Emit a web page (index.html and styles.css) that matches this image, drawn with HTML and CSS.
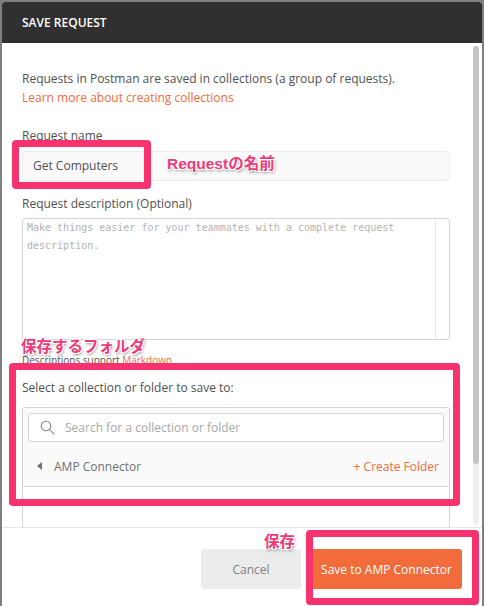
FILE: index.html
```html
<!DOCTYPE html>
<html lang="ja">
<head>
  <meta charset="UTF-8" />
  <title>Save Request</title>
  <link rel="stylesheet" href="styles.css">
</head>
<body>
  <div class="modal">
    <header class="modal-header">SAVE REQUEST</header>

    <div class="modal-main">
      <div class="modal-content">
        <p class="intro">Requests in Postman are saved in collections (a group of requests).</p>
        <a class="link intro-link" href="#">Learn more about creating collections</a>

        <label class="field-label name-label">Request name</label>
        <div class="name-input">Get Computers</div>

        <label class="field-label desc-label">Request description (Optional)</label>
        <div class="desc-box">
          <div class="desc-text">Make things easier for your teammates with a complete request description.</div>
          <div class="desc-gutter"></div>
        </div>
        <div class="desc-help">Descriptions support <a class="link" href="#">Markdown</a></div>

        <label class="field-label select-label">Select a collection or folder to save to:</label>
        <div class="picker">
          <div class="picker-top">
            <div class="search">
              <svg class="search-icon" width="15" height="15" viewBox="0 0 15 15" fill="none" stroke="#888" stroke-width="1.1">
                <circle cx="6" cy="6" r="4.8"/>
                <path d="M9.6 9.6 L14.4 14.4"/>
              </svg>
              <span>Search for a collection or folder</span>
            </div>
            <div class="picker-row">
              <span class="caret"></span>
              <span class="collection">AMP Connector</span>
              <a class="link create" href="#">+ Create Folder</a>
            </div>
          </div>
        </div>
      </div>
      <div class="scrollbar"><div class="thumb"></div></div>
    </div>

    <footer class="modal-footer">
      <button class="btn cancel">Cancel</button>
      <button class="btn save">Save to AMP Connector</button>
    </footer>
  </div>

  <!-- annotations drawn over the screenshot -->
  <div class="mark mark-name"></div>
  <div class="mark mark-folder"></div>
  <div class="mark mark-save"></div>
  <div class="note note-name">Requestの名前</div>
  <div class="note note-folder">保存するフォルダ</div>
  <div class="note note-save">保存</div>
</body>
</html>
```

FILE: styles.css
```css
* {
  margin: 0;
  padding: 0;
  box-sizing: border-box;
}

html, body {
  height: 606px;
  overflow: hidden;
}

body {
  position: relative;
  background: #7f7f7f;
  padding: 2px 2px 0 2px;
  font-family: 'Open Sans', sans-serif;
  font-size: 12px;
  color: #505050;
}

.modal {
  height: 604px;
  background: #fff;
  display: flex;
  flex-direction: column;
  border-radius: 3px 3px 0 0;
  overflow: hidden;
}

.modal-header {
  height: 41px;
  flex: none;
  background: #303030;
  color: #fff;
  font-size: 12px;
  font-weight: 600;
  line-height: 41px;
  padding-left: 20px;
}

.modal-main {
  height: 485px;
  flex: none;
  display: flex;
  border-bottom: 1px solid #e6e6e6;
}

.modal-content {
  width: 469px;
  flex: none;
  padding: 27px 0 0 20px;
  overflow: hidden;
}

.intro {
  line-height: 18px;
}

.link {
  color: #f26b3a;
  text-decoration: none;
}

.intro-link {
  display: block;
  line-height: 19px;
}

.field-label {
  display: block;
  line-height: 18px;
}

.name-label {
  margin-top: 20px;
}

.name-input {
  width: 428px;
  height: 30px;
  margin-top: 6px;
  padding-left: 10px;
  line-height: 28px;
  background: #fafafa;
  border: 1px solid #ececec;
  border-radius: 3px;
}

.desc-label {
  margin-top: 14px;
}

.desc-box {
  width: 428px;
  height: 122px;
  margin-top: 5px;
  display: flex;
  border: 1px solid #d4d4d4;
  border-radius: 3px;
}

.desc-text {
  flex: 1;
  padding: 0 4px;
  font-family: 'DejaVu Sans Mono', monospace;
  font-size: 10px;
  line-height: 18px;
  color: #b3b3b3;
}

.desc-gutter {
  width: 14px;
  border-left: 1px solid #e6e6e6;
}

.desc-help {
  margin-top: 12px;
  font-size: 10px;
  line-height: 16px;
  height: 16px;
}

.select-label {
  margin-top: 11px;
}

.picker {
  width: 428px;
  height: 131px;
  margin-top: 10px;
  border: 1px solid #d4d4d4;
  border-bottom: 0;
  border-radius: 3px 3px 0 0;
}

.picker-top {
  height: 79px;
  padding: 5px 5px 0 5px;
  background: #fafafa;
  border-bottom: 1px solid #d4d4d4;
  border-radius: 3px;
}

.search {
  height: 29px;
  display: flex;
  align-items: center;
  gap: 10px;
  padding-left: 11px;
  background: #fff;
  border: 1px solid #d4d4d4;
  border-radius: 3px;
  color: #a8a8a8;
}

.picker-row {
  height: 44px;
  display: flex;
  align-items: center;
  padding: 4px 5px 0 9px;
}

.caret {
  width: 0;
  height: 0;
  border-top: 4px solid transparent;
  border-bottom: 4px solid transparent;
  border-right: 5px solid #707070;
}

.collection {
  margin-left: 12px;
  color: #707070;
}

.create {
  margin-left: auto;
}

.scrollbar {
  width: 6px;
  height: 479px;
  margin: 3px 0 0 2px;
  background: #efefef;
  border-radius: 3px;
}

.thumb {
  height: 418px;
  background: #c4c4c4;
  border-radius: 3px;
}

.modal-footer {
  flex: 1;
  display: flex;
  justify-content: flex-end;
  gap: 10px;
  padding: 21px 20px 0 0;
}

.btn {
  height: 40px;
  border: none;
  border-radius: 3px;
  font-family: 'Open Sans', sans-serif;
  font-size: 12px;
}

.cancel {
  width: 100px;
  background: #ececec;
  color: #808080;
}

.save {
  width: 151px;
  background: #f26b3a;
  color: #fff;
  font-weight: 500;
}

.mark {
  position: absolute;
  border: 7px solid #f6336f;
  border-radius: 4px;
}

.mark-name {
  left: 12px;
  top: 140px;
  width: 139px;
  height: 49px;
}

.mark-folder {
  left: 9px;
  top: 363px;
  width: 451px;
  height: 143px;
}

.mark-save {
  left: 306px;
  top: 530px;
  width: 173px;
  height: 75px;
}

.note {
  position: absolute;
  font-family: 'Liberation Sans', 'Noto Sans CJK JP', sans-serif;
  font-weight: 700;
  color: #ee3a78;
  text-shadow: 1px 1px 0 #fff, -1px -1px 0 #fff, 1px -1px 0 #fff, -1px 1px 0 #fff, 1px 2px 3px rgba(0, 0, 0, 0.5);
  white-space: nowrap;
}

.note-name {
  left: 167px;
  top: 151px;
  font-size: 15.5px;
}

.note-folder {
  left: 21px;
  top: 334px;
  font-size: 15.5px;
}

.note-save {
  left: 264px;
  top: 529px;
  font-size: 15.5px;
}
```
